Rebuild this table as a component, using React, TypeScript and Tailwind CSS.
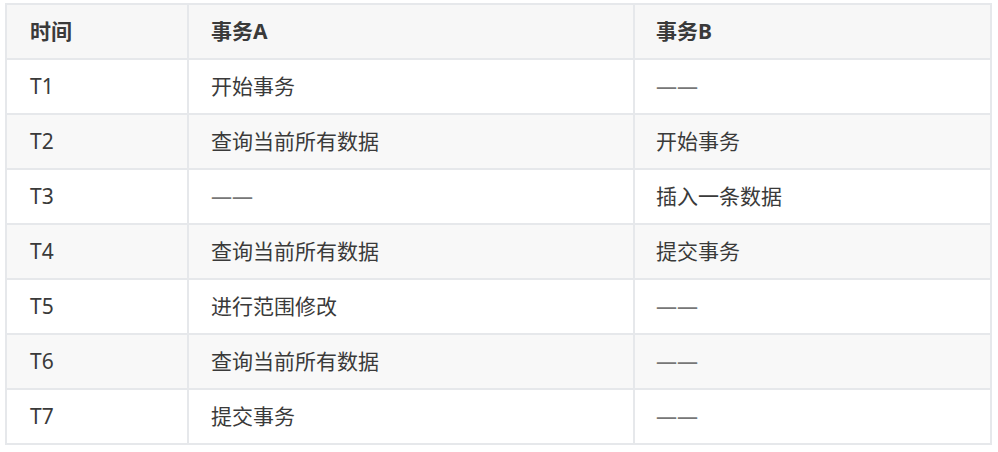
import React from "react";

const rows: [string, string, string][] = [
  ["T1", "开始事务", "——"],
  ["T2", "查询当前所有数据", "开始事务"],
  ["T3", "——", "插入一条数据"],
  ["T4", "查询当前所有数据", "提交事务"],
  ["T5", "进行范围修改", "——"],
  ["T6", "查询当前所有数据", "——"],
  ["T7", "提交事务", "——"],
];

export default function App() {
  return (
    <div
      className="w-[998px] h-[452px] bg-white pl-[5px] pt-[3px]"
      style={{ fontFamily: '"Noto Sans", "Noto Sans CJK SC", sans-serif' }}
    >
      <div className="w-[987px] border-l-2 border-t-2 border-[#e6e8eb] text-[#3a3a3a] text-[21px]">
        <div className="grid grid-cols-[182px_446px_357px] bg-[#f7f7f7] font-bold">
          {["时间", "事务A", "事务B"].map((h, i) => (
            <div
              key={i}
              className={`h-[55px] border-r-2 border-b-2 border-[#e6e8eb] flex items-center ${
                i === 0 ? "pl-[23px]" : i === 1 ? "pl-[22px]" : "pl-[21px]"
              }`}
            >
              {h}
            </div>
          ))}
        </div>
        {rows.map((r, ri) => (
          <div
            key={ri}
            className={`grid grid-cols-[182px_446px_357px] ${
              ri % 2 === 1 ? "bg-[#f8f8f8]" : "bg-white"
            }`}
          >
            {r.map((c, i) => (
              <div
                key={i}
                className={`h-[55px] border-r-2 border-b-2 border-[#e6e8eb] flex items-center ${
                  i === 0 ? "pl-[23px]" : i === 1 ? "pl-[22px]" : "pl-[21px]"
                } ${c === "——" ? "text-[#777777]" : ""}`}
              >
                {c}
              </div>
            ))}
          </div>
        ))}
      </div>
    </div>
  );
}
